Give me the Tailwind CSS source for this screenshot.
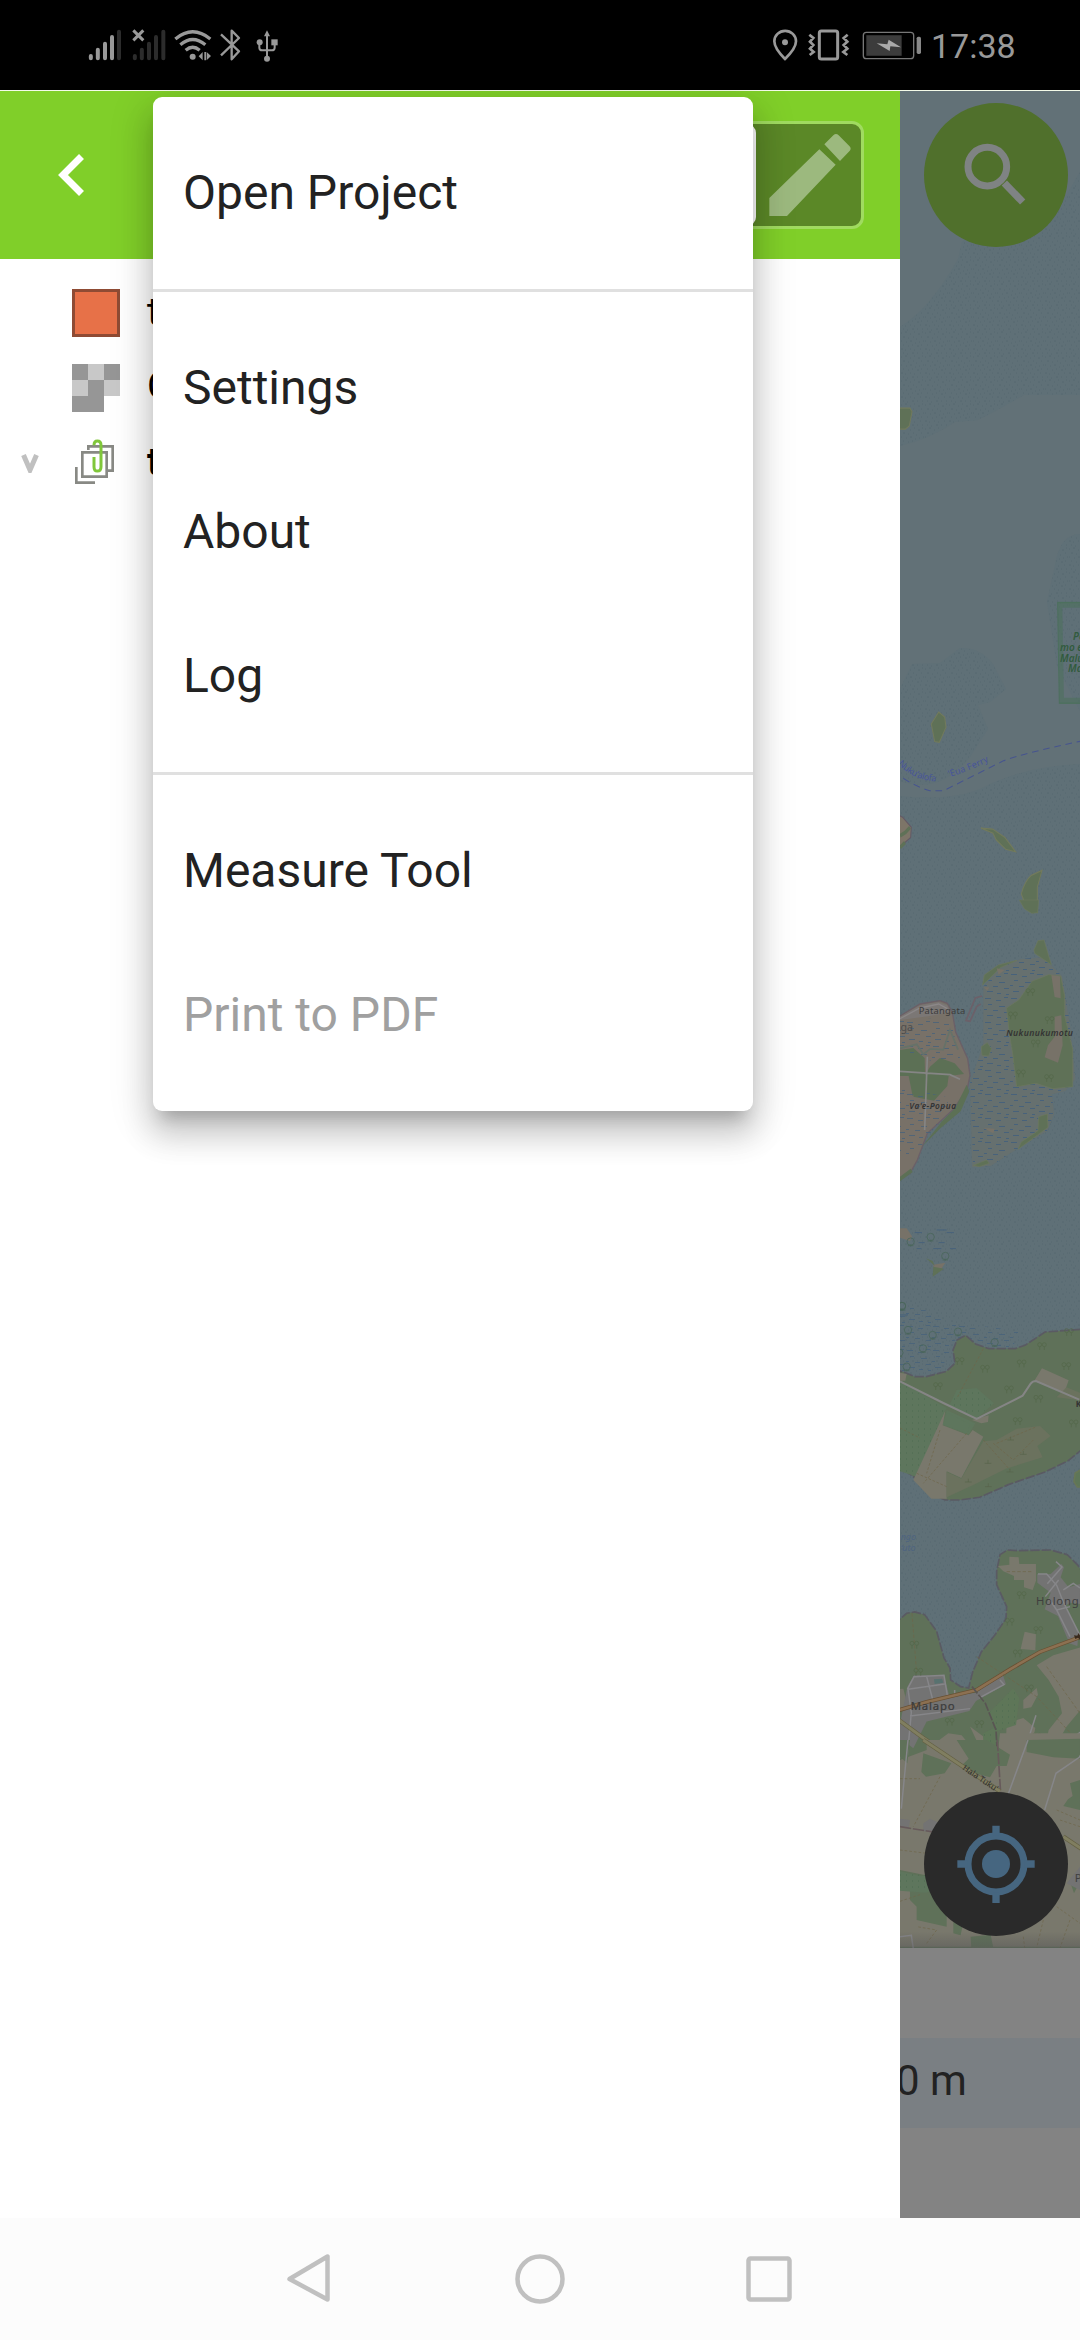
<!DOCTYPE html>
<html lang="en">
<head>
<meta charset="utf-8">
<title>Map project</title>
<script src="https://cdn.jsdelivr.net/npm/@tailwindcss/browser@4"></script>
</head>
<body class="w-[1080px] h-[2340px] overflow-hidden flex flex-col bg-white font-['Roboto',sans-serif] text-[#222222]">

<!-- Status bar -->
<header class="h-[90px] shrink-0 bg-black flex items-center justify-between">
  <svg class="w-[260px] h-[90px] ml-[60px]" viewBox="0 0 780 270" fill="none" stroke="#999" stroke-linecap="round">
    <g stroke-width="12"><path d="M92.500 168v7M113.500 149v26M135 131v44M156 111v64"/><path stroke="#2c2c2c" d="M177 95v80M224.500 168v7M245.500 149v26M267 131v44M288 111v64M310 95v80"/></g>
    <path stroke-width="9" stroke-linecap="butt" d="M220 91l30 30M250 91l-30 30"/>
    <path stroke-width="10" stroke-linecap="butt" d="M346 117Q398 74 451 117M361 134Q398 103 436 134M377 151Q398 133 419 151"/>
    <circle cx="398" cy="170" r="9" fill="#999" stroke="none"/>
    <path fill="#999" stroke="none" d="M428 156v25l-12-12zM433 156h5v25h-5zM440 156l13 12-13 13z"/>
    <path stroke-width="7" stroke-linecap="butt" stroke-linejoin="round" d="M483 103l54 51-22 24V92l22 22-54 52"/>
    <path stroke-width="6" d="M621 100v72M598 128v15q0 8 9 8h28q9 0 9-8v-15"/>
    <g fill="#999" stroke="none"><path d="M621 91l9 18h-18z"/><circle cx="621" cy="176" r="9"/><circle cx="599" cy="127" r="9"/><path d="M634 118h19v18h-19z"/></g>
  </svg>
  <div class="flex items-center mr-[66px]">
    <svg class="w-[160px] h-[90px]" viewBox="90 0 480 270" fill="none" stroke="#999">
      <path stroke-width="8" d="M132 177Q100 145 100 124A32 31 0 0 1 165 124Q165 145 132 177z"/><circle cx="132" cy="127" r="9" fill="#999" stroke="none"/>
      <rect x="235" y="93" width="55" height="84" rx="6" stroke-width="9"/>
      <path stroke-width="8" d="M205 104l12 10-10 11 10 10-10 11 11 10-12 9M320 104l-12 10 11 11-11 10 11 11-12 10 12 9"/>
      <rect x="367" y="97" width="151" height="79" rx="9" stroke="#777" stroke-width="4"/>
      <path fill="#3c3c3c" stroke="none" d="M376 106h106v61H376z"/>
      <path fill="#aaa" stroke="none" d="M407 130l32 3 4-14 37 23-32-3-2 14z"/>
      <rect x="527" y="110" width="13" height="52" rx="5" fill="#888" stroke="none"/>
    </svg>
    <div class="text-[34px] leading-none text-[#999] w-[83px] whitespace-nowrap pt-[2px]">17:38</div>
  </div>
</header>

<main class="h-[2128px] shrink-0 flex relative border-t border-[#f4fbe9]">
  <!-- Layer drawer -->
  <section class="w-[900px] h-full bg-white flex flex-col">
    <div class="h-[168px] shrink-0 bg-[#80cf29] flex items-center justify-between pl-[58px] pr-9">
      <svg class="w-[27px] h-[42px]" viewBox="0 0 27 42" fill="none" stroke="#fff" stroke-width="7"><path d="M23.500 2.500L5 21l18.500 18.500"/></svg>
      <div class="flex h-[108px] rounded-[12px] border-[3px] border-[#a0db60] bg-[#5b8827]">
        <div class="w-[102px] h-[102px] rounded-[9px] bg-white"></div>
        <svg class="w-[105px] h-[102px]" viewBox="48 372 315 306" fill="#9cb97e"><path d="M88 648v-54L238 448l49 46L141 648zM253 433l27-27q8-8 16 0l32 32q8 8 0 16l-28 29z"/></svg>
      </div>
    </div>
    <ul class="pt-[17px] text-[39px] leading-none text-black">
      <li class="h-[75px] pt-[13px] flex pl-[72px]">
        <div class="size-12 bg-[#e77148] border-[3px] border-[#8f4b34] mr-[27px]"></div><span class="pt-1">t</span>
      </li>
      <li class="h-[75px] pt-[13px] flex pl-[72px]">
        <svg class="size-12 mr-[27px]" viewBox="0 0 3 3" shape-rendering="crispEdges"><path fill="#969696" d="M0 0h1v1H0zM2 0h1v1H2zM1 1h1v2H0V2h1z"/><path fill="#c8c8c8" d="M1 0h1v1H1zM0 1h1v1H0zM2 1h1v1H2z"/></svg><span class="pt-[3px]">O</span>
      </li>
      <li class="h-[75px] pt-[13px] flex pl-[21px]">
        <svg class="w-[18px] h-[19px] mt-[15px] mr-[33px]" viewBox="0 0 18 19" fill="none" stroke="#c0c0c0" stroke-width="5"><path d="M2.500 1L9 16l6.500-15"/></svg>
        <svg class="size-12 mr-[27px]" viewBox="216 1077 144 144" fill="none" stroke="#888984" stroke-width="8"><path d="M265 1110v-11h73v73h-14M247 1117h73v73h-73zM229 1161v47h56"/><path stroke="#80c73a" stroke-width="9" d="M282 1096q0-13 10-13 11 0 11 13v64q0 13-11 13-10 0-10-13v-29"/></svg>
        <span class="font-bold pt-1">t</span>
      </li>
    </ul>
  </section>

  <!-- Map side -->
  <section class="w-[180px] h-full flex flex-col bg-[#838383] overflow-hidden">
    <div class="h-[1857px] shrink-0 relative flex flex-col justify-between items-end pt-[12px] pb-[12px] pr-[12px]">
      <svg class="absolute inset-0 w-[180px] h-[1857px]" viewBox="0 0 180 1857" font-family="Noto Sans">
        <defs>
          <pattern id="reef" width="24" height="24" patternUnits="userSpaceOnUse"><path stroke="#51646c" stroke-width="1" opacity=".75" d="M1 2h1M5 1h2M10 3h1M14 1h1M18 3h2M22 1h1M3 6h2M8 7h1M13 6h1M16 8h1M21 6h1M1 10h1M6 11h1M10 10h2M15 12h1M19 11h1M23 10h1M3 14h1M8 15h1M12 14h1M17 15h2M21 14h1M1 18h2M5 19h1M10 18h1M14 19h1M20 18h1M3 22h1M7 23h1M12 22h2M17 22h1M22 22h1"/></pattern>
          <pattern id="flat" width="26" height="24" patternUnits="userSpaceOnUse"><path stroke="#47627b" stroke-width="1" d="M1 2.500h6M12 4.500h5M20 1.500h4M4 8.500h4M15 10.500h6M0 13.500h3M9 14.500h5M20 16.500h5M3 19.500h6M13 21.500h4M22 22.500h3"/></pattern>
          <pattern id="scrub" width="6" height="6" patternUnits="userSpaceOnUse"><path stroke="#4c6950" d="M2 3h1"/></pattern>
          <g id="trees" fill="none" stroke="#536749" stroke-width="2"><circle cx="-6" cy="-4" r="6"/><circle cx="8" cy="-4" r="6"/><path d="M-6 2v10M8 2v10"/></g>
          <g id="mangrove" fill="none" stroke="#4a665c" stroke-width="2.500"><circle r="11"/><path d="M-8 12h16M0 8v6"/></g>
          <linearGradient id="edge" x2="0" y2="1"><stop stop-color="#555" stop-opacity="0"/><stop offset="1" stop-color="#555" stop-opacity=".5"/></linearGradient>
          <path id="shoals" d="M180 81V304H124Q100 318 78 329L55 331Q30 348 0 355V236Q30 218 58 168L62 151 90 130 140 135 160 115zM0 598L12 573 40 572 60 557Q80 556 93 573L106 598 90 611 78 614 88 638 70 666Q40 704 0 690zM180 443Q160 443 155 474L147 511 157 575 180 620zM0 705Q60 711 90 693 130 675 180 673V1857H0z"/>
        </defs>
        <rect width="180" height="1857" fill="#627177"/>
        <use href="#shoals" fill="#5f7077"/>
        <use href="#shoals" fill="url(#reef)"/>

        <!-- Northern islets and ferry route -->
        <g transform="translate(-20 169) scale(.3333 .4209)">
          <g fill="#5f7157" stroke="#727a5c" stroke-width="3"><path d="M40 352h50l6 8-8 34-12 8H40zM176 1074l18 12 4 24-20 36-14-2-10-42zM303 1350l35 2 37 20 32 34-30-6-28-22-10-16zM424 1506q10-30 30-44l32-12-14 40v60l-30-6z"/></g>
          <path fill="#7d7568" stroke="#645965" stroke-width="3" d="M40 1312l28 12 26 24-2 24-52 36z"/><path stroke="#5f7157" stroke-width="9" fill="none" d="M60 1368l16-8 14-12M60 1396l15-12"/>
          <path fill="none" stroke="#46548f" stroke-width="2.500" stroke-dasharray="20 14" d="M40 1215Q100 1250 150 1261H190L370 1190Q430 1172 610 1142"/>
          <g fill="none" stroke="#4d705e"><path stroke-width="14" opacity=".6" d="M610 819H540l5 228h65"/><path stroke-width="3" d="M610 814H533l5 239h72"/></g>
        </g>
        <path id="ferryA" fill="none" d="M-2 673Q18 694 50 690"/><path id="ferryB" fill="none" d="M49 686Q70 680 100 665"/>
        <g fill="#485599" font-size="9"><text textLength="43"><textPath href="#ferryA">Nuku'alofa</textPath></text><text textLength="43"><textPath href="#ferryB">'Eua Ferry</textPath></text></g>
        <g fill="#315b3d" font-size="10" font-style="italic" font-weight="600"><text x="173" y="549">Pe</text><text x="160" y="560">mo e</text><text x="160" y="571">Malu</text><text x="168" y="581">Ma</text></g>

        <!-- Lagoon islands -->
        <g transform="translate(-20 809) scale(.3333)">
          <path fill="#66706f" d="M310 262l50-60 60-24 70-6 56 56 26 160 14 150-30 35-40 10 6 60-20 50-100 60-70 45-56 4-2-110-4-140 40-120z"/>
          <g transform="scale(3)"><path fill="url(#flat)" d="M103 87l17-20 20-8 23-2 19 19 9 53 4 50-10 12-13 3 2 20-7 17-33 20-23 15-18 1-1-37-2-47 14-40z"/></g>
          <g fill="#5f7157" stroke="#6c785e" stroke-width="2"><path d="M418 0h58l-3 38-18 2-22-14zM462 150l12-28 18-2 22 74-50-34zM308 255l5-30 42-30 56-14-50 22-34 34zM380 324l36-24 40-56 50-20 36 4 12 60v60l24 100v112l-60 6-50-16-58 10-12-100-10-60zM304 440l18-12 12 18-8 22-20-2zM476 650l26-8 2 40-30 22-60 44 10-22 50-34zM280 796l40-16 8 10-30 10z"/></g>
          <g fill="#777268"><path d="M514 225l26 4 2 66-18-4zM524 350l20-4 4 90-14 52-40-16 10-36 20-26zM350 205l24 5-18 14zM310 262l18 0-6 10zM310 684l34 2-4 14-14-8z"/></g>
          <path fill="#787168" stroke="#6b6068" stroke-width="4" d="M50 354l70-42 60-10 22 8 15 26 10 60 36 80 7 50-8 40-40 60-80 74-30 80-22 40-40 26z"/>
          <path fill="#7b7775" d="M60 350l60-34 56-10 26 10 8 20-60 12-90 12z"/>
          <g fill="#5c7055"><path d="M60 450l40-6 34 30 2 96-38 18-12-60H60zM150 500l30-26 44 16 28 32-46 6-4 30-40 44-62-12zM60 830l32-24 6 10-38 28zM126 740l60-76 40-40 34-70 8 20-26 60-60 50z"/></g>
          <g transform="scale(3)"><path fill="url(#flat)" opacity=".8" d="M20 120l50-2 10 40-28 3-32-10zM20 186l50 12-12 25-22 30-16 3z"/></g>
          <path fill="none" stroke="#858585" stroke-width="5" d="M60 514l150 10 30 14M142 470l-4 110-4 110"/>
          <path fill="none" stroke="#667269" stroke-width="5" d="M60 445l50-12 20 30 20-16 40 2 20-60 24 60"/>
          <path fill="none" stroke="#8b8788" stroke-width="4" d="M60 356l60-32 56-12 26 14"/>
          <path fill="none" stroke="#6c6069" stroke-width="5" d="M306 288l-20 6-28 68 12 2 20-44 12-8"/>
          <g fill="#333"><text x="116" y="343" font-size="28" textLength="140" fill="#3c3c3c">Patangata</text><text x="42" y="392" font-size="32" fill="#4d4d4d">nga</text><text x="88" y="626" font-size="25" font-style="italic" font-weight="600" textLength="140">Va'e-Popua</text><text x="379" y="408" font-size="26" font-style="italic" font-weight="600" textLength="200">Nukunukumotu</text></g>
          <use href="#trees" x="450" y="276"/><use href="#trees" x="398" y="346"/><use href="#trees" x="508" y="360"/><use href="#trees" x="466" y="430"/><use href="#trees" x="422" y="520"/><use href="#trees" x="506" y="534"/>
          <path fill="#777268" d="M60 985l20 0 16 24-6 14-30-10zM160 1094l36-6-12 18h-22z"/><path fill="#5f7157" d="M158 1130l2-30 32 6zM138 1075l20 8 6 14z"/>
          <use href="#mangrove" x="152" y="1011"/><use href="#mangrove" x="196" y="1068"/><use href="#mangrove" x="92" y="1025"/><use href="#mangrove" x="66" y="1218"/>
          <path stroke="#47627b" stroke-width="3" d="M104 998h22M170 990h30M200 998h22M116 1028h18M176 1028h18M110 1046h14M160 1046h24M210 1046h18M60 1245h24"/>
        </g>

        <!-- Main coast -->
        <g transform="translate(-20 1209) scale(.3333)">
          <g transform="scale(3)"><path fill="url(#flat)" opacity=".8" d="M20 4h15l30 18 45 5 35 5-15 16-35 2-20-10-15 32H20z"/></g>
          <use href="#mangrove" x="84" y="90"/><use href="#mangrove" x="158" y="105"/><use href="#mangrove" x="234" y="95"/><use href="#mangrove" x="129" y="145"/><use href="#mangrove" x="344" y="127"/><use href="#mangrove" x="80" y="200"/><use href="#mangrove" x="66" y="18"/><use href="#mangrove" x="58" y="158"/>
          <path fill="#5f7159" stroke="#5a5a63" stroke-width="5" stroke-dasharray="28 6" d="M40 206l40 14 24 10h35l60-16 26-24-6-40 12-30 26-14 30 26 40 14h78l30-10 60-40 110-8 40 2v326l-80 66-70 34-110 38-86 38-60 8h-44l-36-16-40-40-54-40z"/>
          <path fill="#5e765d" d="M60 244l140 80-90 206-50-16zM230 270l60-6 52 46-52 46-84-36zM200 330l86 40-20 34-78-30z"/>
          <g transform="scale(3)"><path fill="url(#scrub)" d="M20 82l46 27-30 67-16-5zM77 90l20-2 17 15-17 15-28-12z"/></g>
          <path fill="#79786c" d="M196 332l-8 44 78 30 12-16 32 20-66 124-44-20v82h-46l-54-56zM486 205l80 36-14 40-88-40zM60 218l20 4-4 20H60zM276 360l50-14-2 20-20 4z"/>
          <path fill="#5e765d" d="M200 338l70 34-8 30-70-28z"/>
          <path fill="#6b725e" d="M200 516l44 20 66-112 40-4 60-34 70-8 32 30-40 30 16 34-110 34-100 50-78 36z"/><path fill="#6b725e" d="M560 262l50 20v20l-80-10z"/>
          <path fill="#5e7658" stroke="#687756" stroke-width="5" d="M610 505l-24 14-4 26 10 16h20z"/>
          <path fill="none" stroke="#6e6549" stroke-width="2" stroke-dasharray="8 5" d="M310 146l-80 150M60 384l60 30M260 400l-130 150M180 390l-40 130M310 420l80 90M350 430l120-50M340 430l60 50 60-60M110 520l90 40"/>
          <path fill="none" stroke="#858585" stroke-width="6" d="M60 244l130 65 100 48 138-70 24-36q6-8 16-8l130 56"/>
          <g><use href="#trees" x="485" y="138"/><use href="#trees" x="424" y="190"/><use href="#trees" x="558" y="198"/><use href="#trees" x="314" y="206"/><use href="#trees" x="238" y="183"/><use href="#trees" x="173" y="258"/><use href="#trees" x="386" y="268"/><use href="#trees" x="474" y="296"/><use href="#trees" x="412" y="363"/><use href="#trees" x="580" y="370"/><use href="#trees" x="566" y="96"/></g>
          <path fill="none" stroke="#58634a" stroke-width="2" d="M314 490h20m-10 0v-10M255 546h20m-10 0v-10M382 420h20m-10 0v-10M380 516h20m-10 0v-10M420 463h20m-10 0v-10M315 560h20m-10 0v-10"/>
          <text x="587" y="322" font-size="25" font-weight="700" fill="#333">K</text>
          <g fill="#4d6380" font-size="27" font-style="italic"><text x="62" y="721">ngo</text><text x="62" y="754">ʻuto</text></g>

          <path fill="#5f7159" stroke="#5a5a63" stroke-width="5" stroke-dasharray="28 6" d="M40 974l40-34 24-4 30 8 36 50 22 80 18 30 2 36 30 20 24 4 12-48 26-60 40-50 34-50 2-36-30-66v-40l10-50 22-14 30 2 100-2 50 14 30 30 40 56 30 20V2000H40z"/>
          <path fill="#79786c" d="M354 798l34-4v-24l28 2 2 20h50v50l-10 28-26-8v-22h-30v-12l-32-14zM434 995l34 8-2 48-44-4zM470 1096l50-30 90-26v180l-50 60-40 70-24-10 10-50 40-50-10-50-30-50zM40 1170l30-4 14 56-44 10zM380 1270l50-16 36 30-8 40 30 26v80H374zM165 1330l40-30 40 6 50 60 10 64H150zM270 1280l40 30 4 40-16-10zM430 1200l40-36 4 20-20 38-24 4z"/>
          <path fill="#5e7658" d="M330 1235l70-70 18 30-10 80-60 20zM310 1300l40-20 4 140h-44z"/>
          <g transform="scale(3)"><path fill="url(#scrub)" d="M110 412l23-23 6 10-3 26-20 7zM103 433l14-6v46h-14z"/></g>
          <path fill="#737373" d="M472 822l40 0 32-30 8 10-10 30 24 30 34-10v60l-30-4-14 10 40 80-4 40-24-8-34-82-40-20 18-50-40-30zM82 1160l20-34 90 2 16 60 80-10 80-55 10 30-90 50-20 30-170 42-10 20-30 90h-20zM60 1275l80-10-40 80-40-30z"/>
          <path fill="#587270" d="M162 1138l24-2 4 12-26 4z"/>
          <g fill="none" stroke="#868689" stroke-width="4.500"><path d="M528 785l18 16-44 50M474 822l26 0 30 34 20 50 50 100M496 890l40-50M550 870l30-20 20 14M510 900l20 30 40 80M530 930l40-10M82 1168l20-38 90-4 10 60M84 1168l110-16M84 1168l10 70-14 150M140 1130l20 76M90 1248l180-22M360 1140l12 14-74 40M224 1170v16M468 1246l-44 136M610 1290l-40 30 30 20"/></g>
          <path fill="none" stroke="#685033" stroke-width="12" d="M40 1236L140 1206l150-36 100-62 90-52 130-48"/><path fill="none" stroke="#8c7051" stroke-width="8" d="M40 1236L140 1206l150-36 100-62 90-52 130-48"/>
          <path fill="none" stroke="#646144" stroke-width="13" d="M40 1248l90 66 90 60 60 40"/><path fill="none" stroke="#807e60" stroke-width="9" d="M40 1248l90 66 90 60 60 40"/>
          <path fill="none" stroke="#595553" stroke-width="5" stroke-dasharray="26 5" d="M276 1160l40 50 32 80 6 110"/>
          <path fill="none" stroke="#6e6549" stroke-width="2" stroke-dasharray="10 6" d="M96 940l14 180M290 1070l180 120 130 140M380 815h80M500 1100l100 140"/>
          <use href="#trees" x="102" y="1034"/><use href="#trees" x="114" y="1115"/><use href="#trees" x="424" y="885"/><use href="#trees" x="388" y="965"/><use href="#trees" x="474" y="990"/><use href="#trees" x="412" y="1060"/><use href="#trees" x="446" y="1165"/><use href="#trees" x="208" y="1265"/><use href="#trees" x="297" y="1272"/><use href="#trees" x="470" y="1310"/>
          <text x="468" y="916" font-size="34" fill="#3f3f3f" textLength="128">Holong</text><text x="92" y="1231" font-size="34" fill="#3c3c3c" stroke="#3c3c3c" stroke-width=".7" textLength="132">Malapo</text>
          <path fill="#3a2a1c" d="M582 1006l10 1 4-8 4 8v12l-6-6-8 4z"/>
        </g>

        <!-- Inland farms -->
        <g transform="translate(-20 1649) scale(.3333)">
          <path fill="#79786c" d="M60 60l80-30 0-30h120l40 90 50-20 10-90h250v640H60z"/>
          <g fill="#5f7159"><path d="M60 0h30l-8 70-22-20zM130 40l84 30-20 30-56 10-14-14zM230 0h90l70 44-10 34-30 0-20 34-60-16-24-20 20-20zM440 0l160-4v60l-80-4-80-16zM60 390l70 14 60 6 10 90 0 60-90-20 0-40-20-20v-30H60zM220 540l30 6-8 40-22-6zM272 590l60-6 8 40h-66zM570 130l30-10v90l-50-12 14-20 14-10zM572 430l20 10-10 20z"/></g>
          <path fill="#5e765d" d="M60 394l60 14 60-4 14 44-60 10-74-6z"/><g transform="scale(3)"><path fill="url(#scrub)" d="M20 133l40 3 5 13-45 2z"/></g>
          <path fill="#737373" d="M60 236l30 4-4 24-26-4zM130 250l20-14 30 14-20 30-30-8zM560 430l40-50v70z"/>
          <g fill="none" stroke="#868689" stroke-width="4.500"><path d="M84 0l-20 206M444 0l-60 164M610 30l-12 22-70 48-34 110M60 590l34-4 6 40"/></g>
          <path fill="none" stroke="#675a5b" stroke-width="5" d="M60 260l100 16M352 0l10 160" stroke-dasharray="34 5"/>
          <path fill="none" stroke="#646144" stroke-width="13" d="M130 0l230 154M550 290l60 40"/><path fill="none" stroke="#807e60" stroke-width="9" d="M130 0l230 154M550 290l60 40"/>
          <path fill="none" stroke="#6e6549" stroke-width="2" stroke-dasharray="8 6" d="M60 116h60M180 110l-80 150M60 330l80 10M60 484l60-20M140 610l30-40-60-10M430 590l4 34M490 540l-20 84M530 500l70 50M570 540l-30 84M540 240l60 20M530 210l70 30"/>
          <path id="road" fill="none" d="M246 88l150 100"/><text font-size="25" fill="#303030"><textPath href="#road">Hala Tuku'</textPath></text>
          <text x="584" y="425" font-size="34" fill="#3f3f3f">P</text>
          <rect x="60" y="575" width="540" height="50" fill="url(#edge)"/>
        </g>
      </svg>
      <div class="relative size-[144px] rounded-full bg-[#50702c]">
        <svg class="size-full" viewBox="552 308 432 432" fill="none" stroke="#7f8383"><circle cx="742" cy="499" r="58" stroke-width="21"/><path stroke-width="22" d="M793 548l55 57"/></svg>
      </div>
      <div class="relative size-[144px] rounded-full bg-[#2a2a2a]">
        <svg class="size-full" viewBox="132 155 432 432" fill="none" stroke="#466680"><circle cx="348" cy="371" r="84" stroke-width="21"/><path stroke-width="22" d="M348 256v30M348 456v32M232 371h30M434 371h30"/><circle cx="348" cy="371" r="42" fill="#466680" stroke="none"/></svg>
      </div>
    </div>
    <div class="mt-[90px] h-[90px] shrink-0 bg-[#7a7f83] flex items-center text-[42px]"><span class="-ml-[4px] pb-[6px]">0 m</span></div>
  </section>

  <!-- Overflow menu -->
  <nav class="absolute left-[153px] top-[6px] w-[600px] bg-white rounded-[9px] text-[48px] leading-none shadow-[0_15px_15px_-9px_rgba(0,0,0,0.2),0_24px_30px_3px_rgba(0,0,0,0.14),0_9px_42px_6px_rgba(0,0,0,0.12)]">
    <div class="py-6 px-[30px]"><div class="h-36 flex items-center">Open Project</div></div>
    <div class="h-[3px] bg-[#e0e0e0]"></div>
    <div class="py-6 px-[30px]"><div class="h-36 flex items-center">Settings</div><div class="h-36 flex items-center">About</div><div class="h-36 flex items-center">Log</div></div>
    <div class="h-[3px] bg-[#e0e0e0]"></div>
    <div class="py-6 px-[30px]"><div class="h-36 flex items-center">Measure Tool</div><div class="h-36 flex items-center text-[#a0a0a0]">Print to PDF</div></div>
  </nav>
</main>

<!-- Navigation bar -->
<footer class="grow bg-[#fcfcfc] flex items-center">
  <svg class="w-[828px] h-[122px]" viewBox="0 2218 828 122" fill="none" stroke="#c0c0c0" stroke-width="4.500" stroke-linejoin="round"><path d="M327.500 2256.500v43L289.500 2279z"/><circle cx="540" cy="2279" r="22.500"/><rect x="748.500" y="2258.500" width="41" height="41" rx="2"/></svg>
</footer>
</body>
</html>
